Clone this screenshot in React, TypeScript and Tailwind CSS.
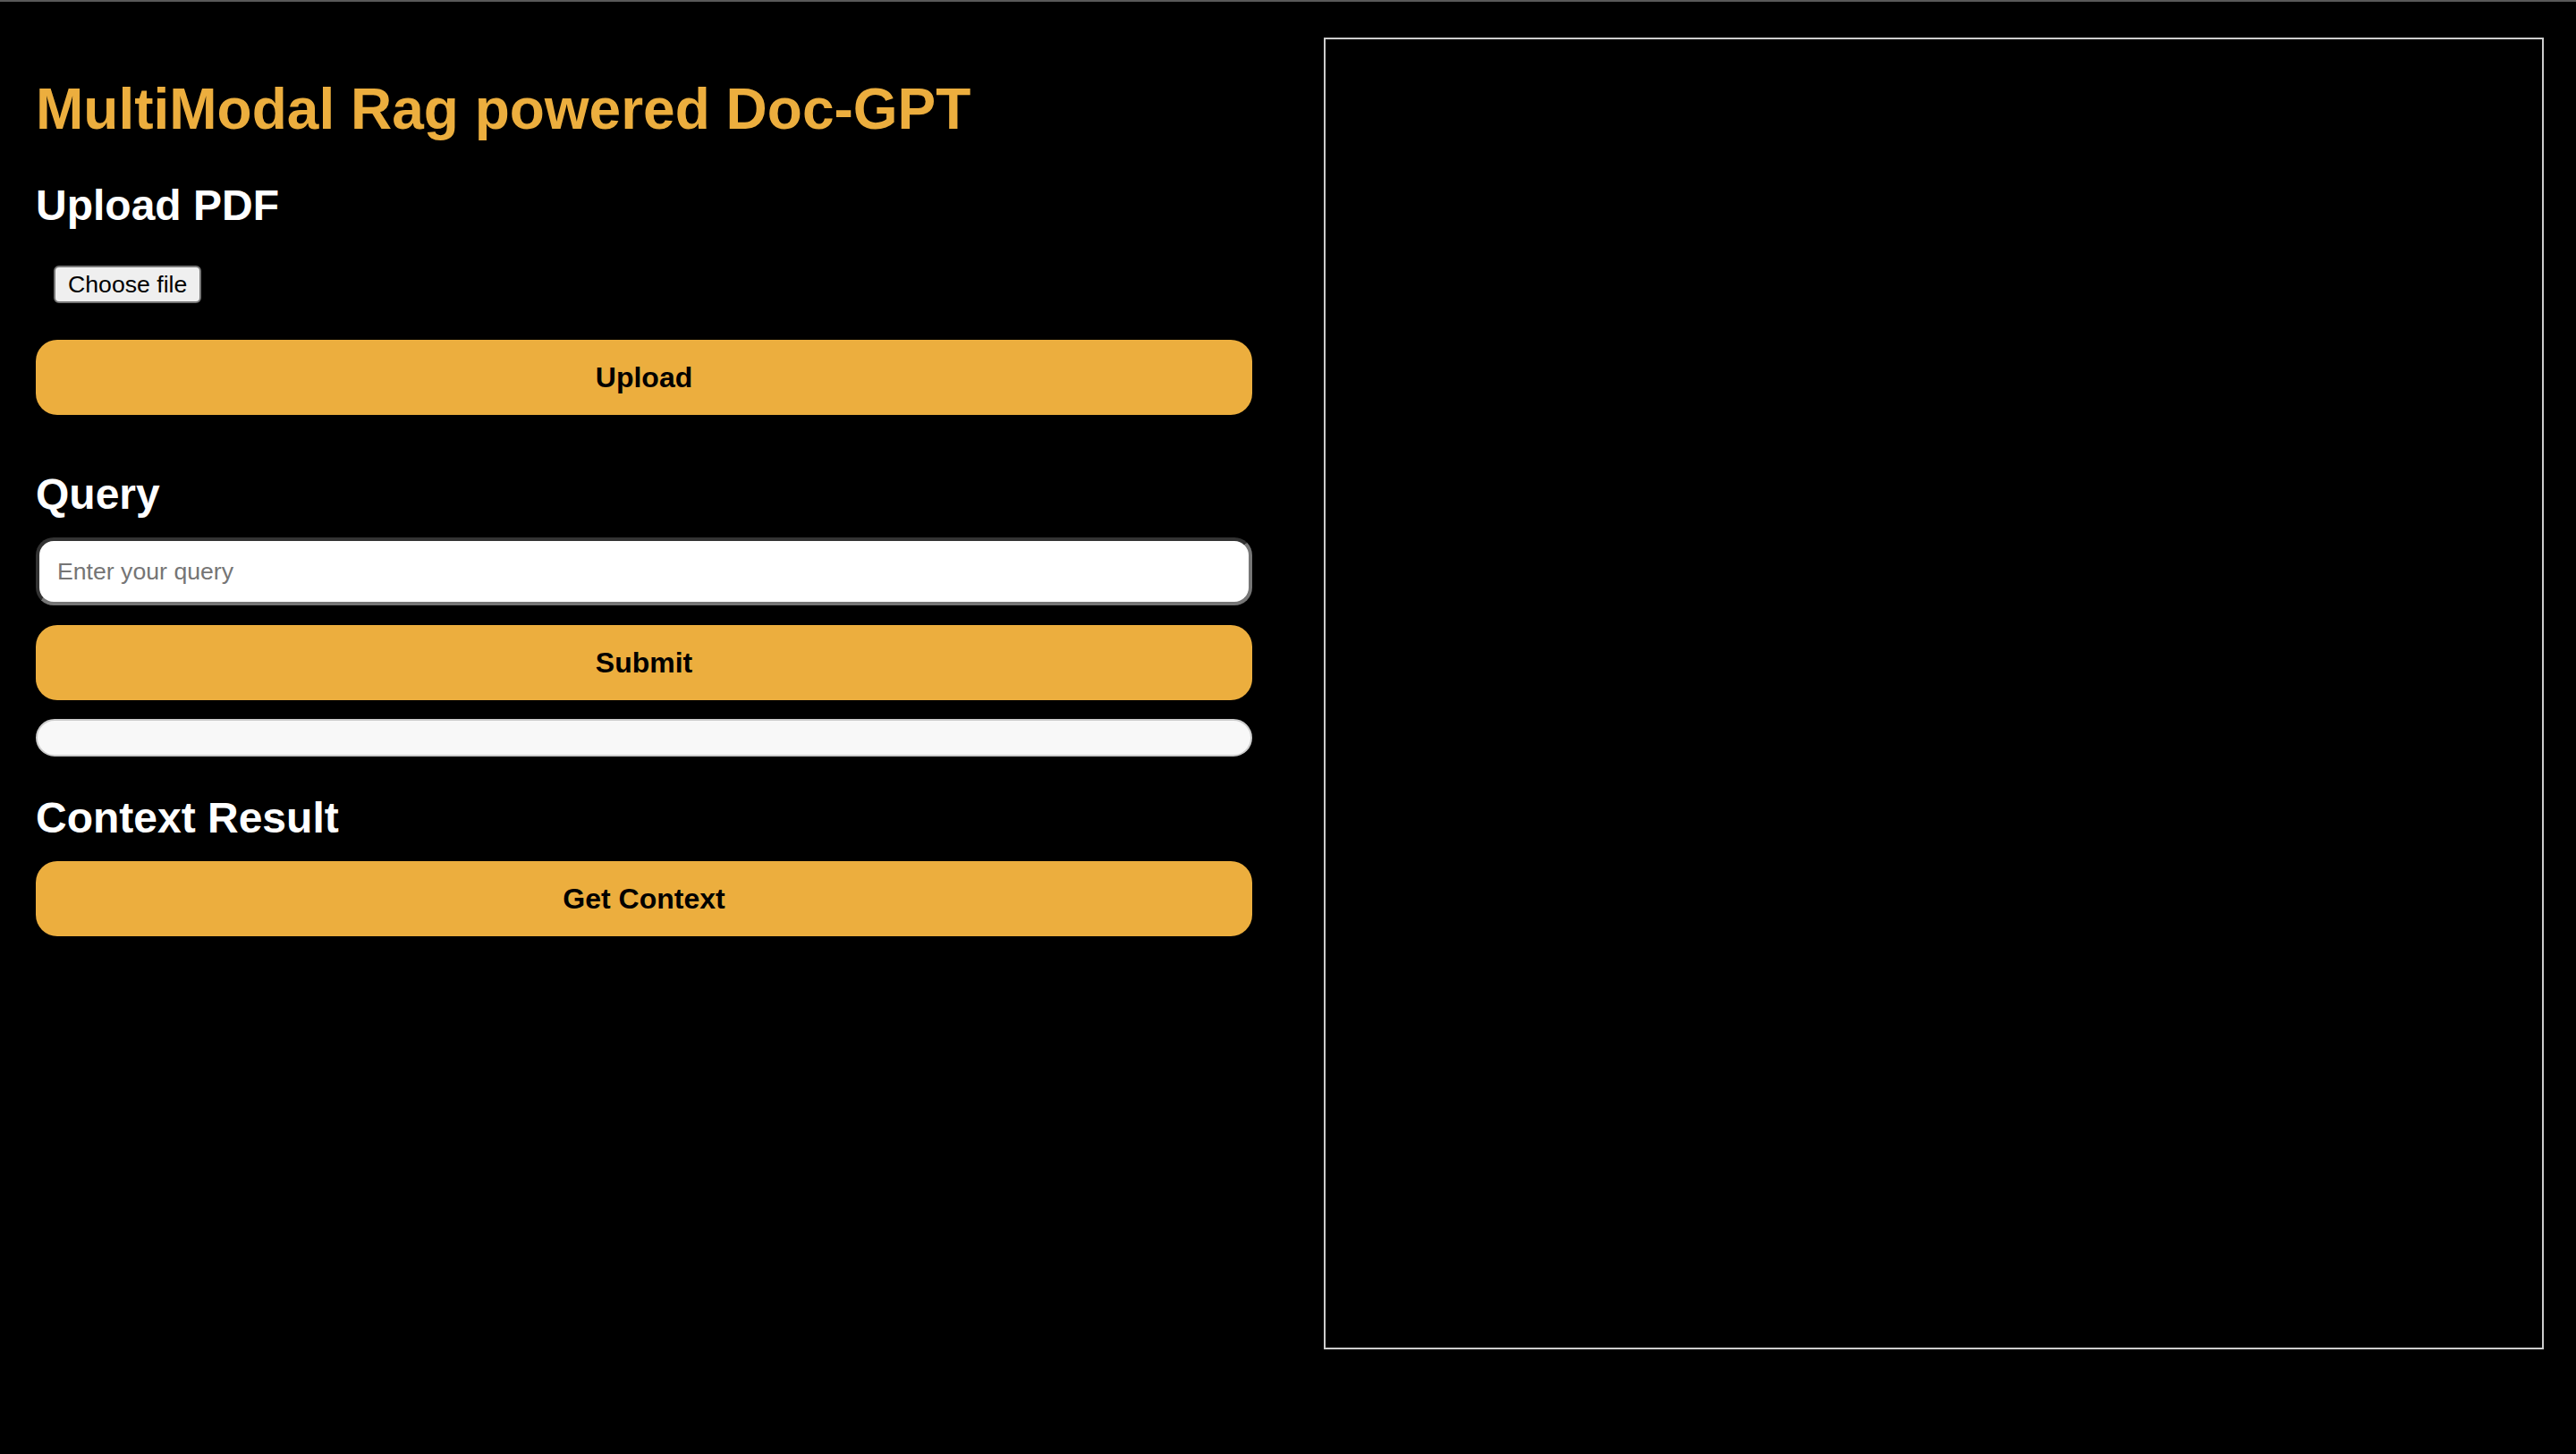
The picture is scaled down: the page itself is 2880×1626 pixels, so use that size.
import React, { useState } from "react";

const orangeButton =
  "block w-full h-[84px] mb-[20px] rounded-[24px] bg-[#ecae3e] text-black text-[32px] font-bold leading-[normal] cursor-pointer";

const sectionTitle =
  "mb-[20px] text-[48px] font-bold leading-[normal] text-white";

export default function App() {
  const [query, setQuery] = useState("");

  return (
    <div className="min-h-screen bg-black border-t-2 border-[#595959] font-['Liberation_Sans',Arial,sans-serif]">
      <div className="flex gap-[80px] px-[40px] pt-[40px]">
        {/* flex column so the margins add up instead of collapsing */}
        <div className="flex flex-col w-[1360px] shrink-0">
          <h1 className="mt-[43px] mb-[43px] text-[64px] font-bold leading-[normal] text-[#ecae3e]">
            MultiModal Rag powered Doc-GPT
          </h1>

          <h2 className={sectionTitle}>Upload PDF</h2>
          <div className="m-[20px]">
            <button
              type="button"
              className="h-[42px] px-[14px] rounded-[6px] border-2 border-[#767676] bg-[#efefef] text-[26.67px] leading-none text-black"
            >
              Choose file
            </button>
          </div>
          <button type="button" className={orangeButton + " mt-[21px]"}>
            Upload
          </button>

          <h2 className={sectionTitle + " mt-[41px]"}>Query</h2>
          <input
            type="text"
            value={query}
            onChange={(e) => setQuery(e.target.value)}
            placeholder="Enter your query"
            className="block w-full h-[76px] mt-[1px] px-[20px] rounded-[20px] border-4 border-t-[#333333] border-l-[#333333] border-b-[#767676] border-r-[#767676] bg-white text-[26.67px] text-black placeholder:text-[#757575] outline-none"
          />
          <button type="button" className={orangeButton + " mt-[22px]"}>
            Submit
          </button>
          <div className="h-[42px] mt-[1px] rounded-full border-2 border-[#cccccc] bg-[#f8f8f8]" />

          <h2 className={sectionTitle + " mt-[41px]"}>Context Result</h2>
          <button type="button" className={orangeButton + " mt-[1px]"}>
            Get Context
          </button>
        </div>

        <div className="w-[1364px] h-[1467px] shrink-0 border-2 border-[#cccccc]" />
      </div>
    </div>
  );
}
